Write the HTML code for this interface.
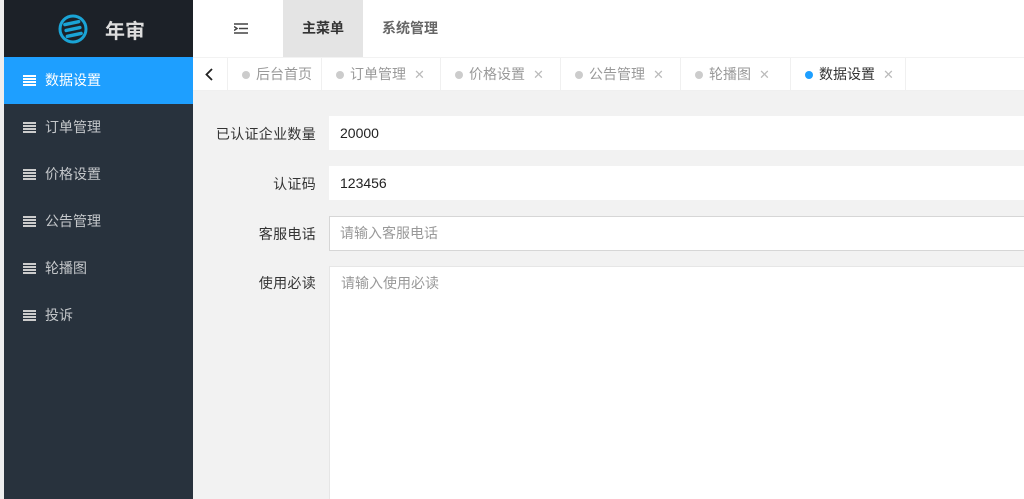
<!DOCTYPE html>
<html><head><meta charset="utf-8"><style>
*{margin:0;padding:0;box-sizing:border-box}
html,body{width:1024px;height:499px;overflow:hidden}
body{background:#f2f2f2;font-family:"Liberation Sans","Noto Sans CJK SC",sans-serif;position:relative}
.strip{position:absolute;left:0;top:0;width:4px;height:499px;background:#eee}
.side{position:absolute;left:4px;top:0;width:189px;height:499px;background:#28323d}
.logo{height:57px;background:#1c2128;position:relative}
.logo svg{position:absolute;left:54px;top:14px}
.logo span{position:absolute;left:101px;top:15px;color:#ddd;font-size:20px;font-weight:bold}
.item{height:47px;line-height:47px;color:#c4c7ca;font-size:14px;padding-left:19px;position:relative}
.item.act{background:#1e9fff;color:#fff}
.ic{display:inline-block;width:13px;height:11px;margin-right:9px;vertical-align:-1px;background:repeating-linear-gradient(#ccc 0 2px,transparent 2px 3px)}
.act .ic{background:repeating-linear-gradient(#fff 0 2px,transparent 2px 3px)}
.top{position:absolute;left:193px;top:0;right:0;height:57px;background:#fff}
.tabs{position:absolute;left:193px;top:57px;right:0;height:34px;background:#fff;border-top:1px solid #f2f2f2;border-bottom:1px solid #f0f0f0}
.tab{position:absolute;top:0;height:33px;line-height:33px;font-size:14px;color:#999;border-left:1px solid #f0f0f0}
.dot{display:inline-block;width:8px;height:8px;border-radius:50%;background:#ccc;margin-right:6px}
.x{color:#bbb;margin-left:8px;font-size:13px}
.lab{position:absolute;right:708px;font-size:14px;color:#333;text-align:right;letter-spacing:0.3px}
.inp{position:absolute;left:329px;right:0;background:#fff;font-size:14px;color:#222;padding-left:11px}
</style></head><body>
<div class="strip"></div>
<div class="side">
<div class="logo"><svg width="30" height="30" viewBox="0 0 30 30"><circle cx="15" cy="15" r="13" fill="none" stroke="#1aa4d6" stroke-width="3"/><path d="M8 9h14M8 15h14M8 21h14" stroke="#1aa4d6" stroke-width="3.5" stroke-linecap="round" transform="rotate(-12 15 15)"/></svg><span>年审</span></div>
<div class="item act"><i class="ic"></i>数据设置</div>
<div class="item"><i class="ic"></i>订单管理</div>
<div class="item"><i class="ic"></i>价格设置</div>
<div class="item"><i class="ic"></i>公告管理</div>
<div class="item"><i class="ic"></i>轮播图</div>
<div class="item"><i class="ic"></i>投诉</div>
</div>
<div class="top">
<svg style="position:absolute;left:41px;top:23px" width="14" height="11"><path d="M0 1h14M5 5.5h9M0 10h14M0 3.5l3 2-3 2" stroke="#444" stroke-width="1.5" fill="none"/></svg>
<div style="position:absolute;left:90px;top:0;width:80px;height:57px;background:#e4e4e4;line-height:57px;text-align:center;font-size:14px;font-weight:bold;color:#333">主菜单</div>
<div style="position:absolute;left:189px;top:0;line-height:57px;font-size:14px;font-weight:bold;color:#666">系统管理</div>
</div>
<div class="tabs">
<svg style="position:absolute;left:12px;top:10px" width="8" height="13"><path d="M7 1L1.5 6.5 7 12" stroke="#222" stroke-width="1.8" fill="none"/></svg>
<div class="tab" style="left:34px;width:94px;padding-left:14px"><i class="dot"></i>后台首页</div>
<div class="tab" style="left:128px;width:119px;padding-left:14px"><i class="dot"></i>订单管理<span class="x">✕</span></div>
<div class="tab" style="left:247px;width:120px;padding-left:14px"><i class="dot"></i>价格设置<span class="x">✕</span></div>
<div class="tab" style="left:367px;width:120px;padding-left:14px"><i class="dot"></i>公告管理<span class="x">✕</span></div>
<div class="tab" style="left:487px;width:110px;padding-left:14px"><i class="dot"></i>轮播图<span class="x">✕</span></div>
<div class="tab" style="left:597px;width:116px;padding-left:14px;color:#333;border-right:1px solid #f0f0f0"><i class="dot" style="background:#1e9fff"></i>数据设置<span class="x">✕</span></div>
</div>
<div class="lab" style="top:124px">已认证企业数量</div>
<div class="inp" style="top:116px;height:34px;line-height:34px">20000</div>
<div class="lab" style="top:174px">认证码</div>
<div class="inp" style="top:166px;height:34px;line-height:34px">123456</div>
<div class="lab" style="top:224px">客服电话</div>
<div class="inp" style="top:216px;height:35px;line-height:33px;border:1px solid #d6d6d6;border-right:none;color:#999;padding-left:10px">请输入客服电话</div>
<div class="lab" style="top:273px">使用必读</div>
<div class="inp" style="top:266px;height:240px;padding-top:6px;color:#999;border:1px solid #e6e6e6;border-right:none">请输入使用必读</div>
</body></html>
